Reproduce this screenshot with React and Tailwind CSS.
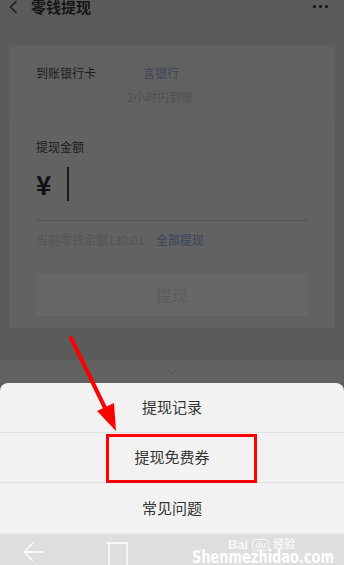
import React from "react";

const font = { fontFamily: '"Noto Sans CJK SC", "Liberation Sans", sans-serif' };

function SheetItem({ label, last }) {
  return (
    <div
      className={`h-[50px] flex items-center justify-center text-[15px] text-[#333333] ${
        last ? "" : "border-b border-[#e2e2e2]"
      }`}
    >
      {label}
    </div>
  );
}

export default function App() {
  return (
    <div
      className="relative w-[344px] h-[565px] overflow-hidden bg-[#5b5b5b] flex flex-col"
      style={font}
    >
      {/* Header (top cut off) */}
      <div className="h-[45px] shrink-0">
        <div className="h-[13px] flex items-center pl-[9px] pr-[16px]">
          <svg width="9" height="14" viewBox="0 0 9 14" className="mt-[1px]">
            <path d="M7.5 1 L1.5 7 L7.5 13" fill="none" stroke="#1a1a1a" strokeWidth="1.4" />
          </svg>
          <span className="ml-[13px] text-[15px] leading-[15px] font-bold text-[#161616]">
            零钱提现
          </span>
          <div className="ml-auto flex gap-[3px]">
            <span className="w-[3px] h-[3px] rounded-full bg-[#111]" />
            <span className="w-[3px] h-[3px] rounded-full bg-[#111]" />
            <span className="w-[3px] h-[3px] rounded-full bg-[#111]" />
          </div>
        </div>
      </div>

      {/* Card: bank */}
      <div className="mx-[9px] h-[78px] shrink-0 bg-[#616161] pt-[20px] pl-[27px]">
        <div className="flex">
          <div className="w-[92px] text-[12px] leading-[16px] text-[#1c1c1c]">到账银行卡</div>
          <div className="w-[64px] flex flex-col items-center whitespace-nowrap">
            <span className="text-[12px] leading-[16px] text-[#3f4658] pl-[2px]">言银行</span>
            <span className="mt-[8px] text-[12px] leading-[16px] text-[#505050]">2小时内到账</span>
          </div>
        </div>
      </div>

      {/* Card: amount */}
      <div className="mx-[9px] h-[205px] shrink-0 bg-[#626262] px-[27px] pt-[16px]">
        <div className="text-[12px] leading-[16px] text-[#1c1c1c]">提现金额</div>
        <div className="mt-[10px] h-[38px] flex items-center">
          <span className="text-[26px] leading-[26px] font-bold text-[#111]">¥</span>
          <span className="ml-[16px] w-[2px] h-[34px] bg-[#1a1a1a]" />
        </div>
        <div className="mt-[17px] border-t border-[#555555]" />
        <div className="mt-[11px] flex items-center text-[12px] leading-[16px] whitespace-nowrap">
          <span className="text-[#555555]">当前零钱余额130.01</span>
          <span className="ml-[11px] text-[#3a4259]">全部提现</span>
        </div>
        <div className="mt-[25px] h-[43px] rounded-[3px] bg-[#676767] flex items-center justify-center text-[16px] text-[#5c5c5c]">
          提现
        </div>
      </div>

      {/* Gap + collapsed section */}
      <div className="h-[32px] shrink-0" />
      <div className="h-[23px] shrink-0 bg-[#626262] flex items-start justify-center pt-[9px]">
        <svg width="12" height="6" viewBox="0 0 12 6">
          <path d="M1 0.5 L6 5 L11 0.5" fill="none" stroke="#555555" strokeWidth="1" />
        </svg>
      </div>

      {/* Bottom sheet */}
      <div className="h-[150px] shrink-0 bg-[#f2f2f2] rounded-t-[8px]">
        <SheetItem label="提现记录" />
        <SheetItem label="提现免费券" />
        <SheetItem label="常见问题" last />
      </div>

      {/* Nav bar */}
      <div className="flex-1 bg-[#dedede] border-t-[2px] border-[#e6e6e6] relative">
        <svg width="24" height="24" viewBox="0 0 24 24" className="absolute left-[22px] top-[6px]">
          <path d="M22 11 L2 11 M11 2 L2 11 L11 20" fill="none" stroke="#ffffff" strokeWidth="1.3" />
        </svg>
        <svg width="24" height="28" viewBox="0 0 24 28" className="absolute left-[106px] top-[6px]">
          <path d="M0 2 L22 2 M3 2 L3 28 M21 2 L21 28" fill="none" stroke="#ffffff" strokeWidth="1.3" />
        </svg>
      </div>

      {/* Watermark */}
      <div
        className="absolute left-[228px] top-[538px] flex items-center gap-[4px] text-[13px] leading-[13px] font-bold text-[#f6f6f6] whitespace-nowrap"
        style={{ fontFamily: '"Liberation Sans", "Noto Sans CJK SC", sans-serif' }}
      >
        <span>Bai</span>
        <span className="text-[9px] leading-[10px] px-[2px] rounded-[4px] border border-[#f6f6f6]">du</span>
        <span className="text-[11px]">经验</span>
      </div>
      <div
        className="absolute left-[192px] top-[548px] origin-left scale-x-[0.72] text-[18px] leading-[18px] font-bold text-white whitespace-nowrap"
        style={{ fontFamily: '"DejaVu Sans", "Liberation Sans", sans-serif' }}
      >
        Shenmezhidao.com
      </div>

      {/* Annotation: red box */}
      <div className="absolute left-[106px] top-[434px] w-[151px] h-[49px] border-[3px] border-[#ff0000]" />

      {/* Annotation: red arrow */}
      <svg className="absolute left-0 top-0" width="344" height="565" viewBox="0 0 344 565">
        <line x1="71" y1="338" x2="108" y2="414" stroke="#ff0000" strokeWidth="4" strokeLinecap="round" />
        <polygon points="116,431 97,411 114,403" fill="#ff0000" />
      </svg>
    </div>
  );
}
